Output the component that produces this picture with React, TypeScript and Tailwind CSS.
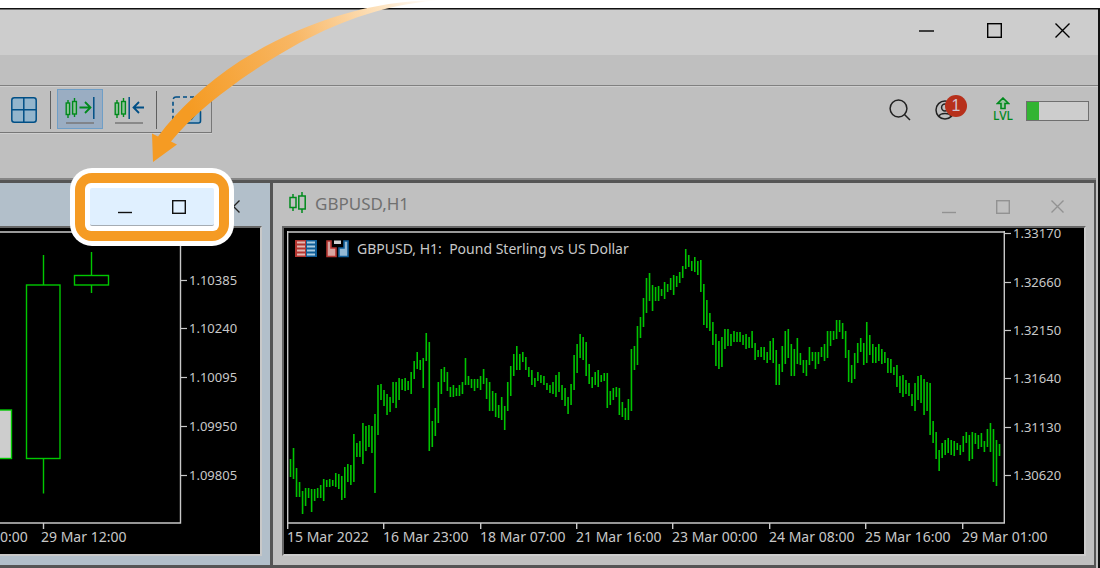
import type { ReactNode } from 'react';

type Bar = [high: number, low: number];

const FONT = "font-['Noto_Sans',sans-serif]";

const gbpusdBars: Bar[] = [
  [459, 477], [448, 479], [468, 497], [482, 497], [491, 514], [488, 506], [488, 498], [489, 512],
  [489, 501], [488, 498], [485, 498], [479, 501], [480, 487], [479, 487], [480, 486], [473, 487],
  [474, 489], [476, 500], [467, 498], [464, 482], [465, 485], [434, 482], [443, 457], [441, 457],
  [423, 464], [426, 451], [425, 447], [426, 453], [414, 493], [385, 435], [384, 400], [390, 406],
  [394, 415], [397, 412], [382, 403], [382, 408], [378, 400], [379, 390], [378, 391], [381, 390],
  [372, 394], [361, 379], [352, 369], [360, 370], [358, 388], [333, 361], [342, 451], [421, 447],
  [408, 436], [382, 423], [369, 394], [367, 382], [372, 391], [387, 397], [385, 397], [388, 396],
  [385, 396], [382, 394], [358, 385], [376, 385], [379, 388], [379, 391], [379, 388], [376, 390],
  [369, 384], [378, 399], [382, 411], [391, 411], [393, 417], [405, 418], [397, 420], [406, 430],
  [382, 411], [366, 396], [354, 376], [346, 370], [354, 370], [352, 362], [357, 370], [367, 377],
  [370, 385], [378, 387], [372, 381], [375, 383], [376, 385], [383, 390], [385, 393], [382, 394],
  [375, 397], [372, 392], [385, 400], [388, 406], [397, 414], [384, 405], [355, 390], [344, 373],
  [334, 358], [337, 360], [342, 376], [364, 384], [377, 388], [372, 385], [370, 387], [375, 382],
  [373, 381], [373, 408], [391, 405], [388, 400], [387, 397], [388, 415], [402, 417], [408, 420],
  [399, 420], [349, 411], [346, 370], [326, 365], [317, 338], [298, 327], [278, 313], [273, 301],
  [285, 311], [287, 301], [286, 301], [289, 296], [282, 299], [284, 292], [278, 290], [275, 295],
  [276, 287], [272, 283], [266, 278], [249, 269], [255, 267], [261, 271], [257, 272], [261, 275],
  [260, 292], [284, 325], [300, 328], [313, 331], [322, 345], [334, 366], [341, 369], [337, 367],
  [329, 349], [329, 346], [334, 346], [331, 342], [332, 342], [332, 342], [335, 345], [334, 349],
  [337, 348], [331, 348], [343, 360], [350, 357], [347, 357], [347, 360], [352, 363], [341, 360],
  [338, 363], [350, 385], [364, 385], [346, 372], [331, 364], [329, 358], [344, 376], [349, 376],
  [338, 364], [353, 365], [360, 373], [360, 376], [347, 365], [352, 361], [352, 369], [352, 364],
  [347, 357], [344, 361], [331, 358], [331, 346], [331, 340], [320, 339], [320, 332], [323, 339],
  [331, 358], [350, 382], [365, 383], [353, 379], [343, 363], [338, 352], [343, 365], [322, 363],
  [335, 355], [344, 363], [347, 363], [344, 361], [349, 364], [352, 363], [358, 373], [359, 373],
  [367, 375], [365, 387], [376, 393], [375, 397], [380, 394], [383, 396], [394, 406], [383, 411],
  [376, 400], [375, 403], [379, 415], [382, 411], [383, 435], [421, 443], [432, 459], [450, 471],
  [443, 458], [440, 455], [438, 453], [440, 455], [441, 456], [443, 450], [445, 455], [436, 452],
  [432, 443], [435, 461], [432, 459], [433, 444], [435, 449], [433, 447], [441, 452], [429, 447],
  [423, 452], [429, 482], [440, 486], [444, 456],
];

const FIRST_BAR = 290.5;
const LAST_BAR = 999.5;
const barStep = (LAST_BAR - FIRST_BAR) / (gbpusdBars.length - 1);

const gbpusdPrices = [
  { label: '1.33170', y: 233 },
  { label: '1.32660', y: 282 },
  { label: '1.32150', y: 330 },
  { label: '1.31640', y: 378 },
  { label: '1.31130', y: 427 },
  { label: '1.30620', y: 475 },
];

const gbpusdDates = [
  { label: '15 Mar 2022', x: 287 },
  { label: '16 Mar 23:00', x: 383 },
  { label: '18 Mar 07:00', x: 480 },
  { label: '21 Mar 16:00', x: 576 },
  { label: '23 Mar 00:00', x: 672 },
  { label: '24 Mar 08:00', x: 769 },
  { label: '25 Mar 16:00', x: 865 },
  { label: '29 Mar 01:00', x: 962 },
];

const eurusdPrices = [
  { label: '1.10385', y: 280 },
  { label: '1.10240', y: 328 },
  { label: '1.10095', y: 377 },
  { label: '1.09950', y: 426 },
  { label: '1.09805', y: 475 },
];

function MinimizeIcon({ size, low = false }: { size: number; low?: boolean }) {
  const y = low ? size - 1.5 : size / 2 + 0.5;
  return (
    <svg width={size} height={size} stroke="currentColor" strokeWidth="1.4" aria-hidden="true">
      <path d={`M0 ${y}H${size}`} />
    </svg>
  );
}

function MaximizeIcon({ size }: { size: number }) {
  return (
    <svg width={size} height={size} fill="none" stroke="currentColor" strokeWidth="1.4" aria-hidden="true">
      <rect x="0.7" y="0.7" width={size - 1.4} height={size - 1.4} />
    </svg>
  );
}

function CloseIcon({ size }: { size: number }) {
  return (
    <svg width={size} height={size} stroke="currentColor" strokeWidth="1.4" aria-hidden="true">
      <path d={`M0.5 0.5L${size - 0.5} ${size - 0.5}M${size - 0.5} 0.5L0.5 ${size - 0.5}`} />
    </svg>
  );
}

function WindowButton({ label, className, children }: { label: string; className: string; children: ReactNode }) {
  return (
    <button type="button" aria-label={label} className={`flex items-center justify-center ${className}`}>
      {children}
    </button>
  );
}

function Separator() {
  return <div className="mt-0.5 h-[38px] w-px bg-[#5f5f5f]" />;
}

function Candles() {
  return (
    <g stroke="#008a1c" strokeWidth="1.4" fill="#8fc39a">
      <path d="M3 3V21M9.5 1V20" />
      <rect x="1.2" y="6" width="3.4" height="11.5" />
      <rect x="7.6" y="4.5" width="3.8" height="12.5" />
    </g>
  );
}

function Toolbar() {
  return (
    <div className="flex h-[46px] items-start border-r border-b border-[#777] pt-0.5 pl-[11px] shadow-[0_1px_0_#cfcfcf]">
      <button type="button" aria-label="Tile windows" className="mt-2">
        <svg width="26" height="26" fill="#93b5cc" stroke="#004f86" strokeWidth="1.5" aria-hidden="true">
          <rect x="0.8" y="0.8" width="24.4" height="24.4" rx="2.5" />
          <path d="M12.8 1V25M1 12.8H25" />
        </svg>
      </button>
      <div className="ml-[13px]">
        <Separator />
      </div>
      <button
        type="button"
        aria-label="Auto scroll"
        aria-pressed="true"
        className="ml-1.5 flex h-10 w-[46px] items-center justify-center border border-[#6f9ec6] bg-[#9aadc2] pt-1"
      >
        <svg width="30" height="28" fill="none" strokeWidth="1.5" aria-hidden="true">
          <Candles />
          <path d="M14.5 10.5H25M20 5L25.5 10.5L20 16" stroke="#008a1c" strokeWidth="1.8" />
          <path d="M28.8 0V22" stroke="#004f86" />
          <path d="M1 26H29" stroke="#777" />
        </svg>
      </button>
      <button type="button" aria-label="Chart shift" className="ml-[11px] flex h-10 items-center pt-1">
        <svg width="31" height="28" fill="none" strokeWidth="1.5" aria-hidden="true">
          <Candles />
          <path d="M15.2 0V22" stroke="#004f86" />
          <path d="M19.5 10.5H30M25 5L19.5 10.5L25 16" stroke="#004f86" strokeWidth="1.8" />
          <path d="M1 26H29" stroke="#777" />
        </svg>
      </button>
      <div className="ml-[11px]">
        <Separator />
      </div>
      <button type="button" aria-label="New window" className="mt-[7px] mr-[9px] ml-[15px]">
        <svg width="30" height="28" fill="none" stroke="#004f86" strokeWidth="1.6" aria-hidden="true">
          <rect x="1" y="1" width="25" height="25" rx="3" strokeDasharray="4 3" />
          <rect x="10" y="14" width="18.5" height="13" rx="2" fill="#93b5cc" />
          <path d="M16 20L19.5 23L24 17" />
        </svg>
      </button>
    </div>
  );
}

function StatusTools() {
  return (
    <div className="flex items-center pt-2.5 pr-[9px]">
      <button type="button" aria-label="Search">
        <svg width="22" height="22" fill="none" stroke="#222" strokeWidth="1.5" aria-hidden="true">
          <circle cx="9.5" cy="9.5" r="8.4" />
          <path d="M15.5 15.5L21 21" />
        </svg>
      </button>
      <button type="button" aria-label="Account, 1 notification" className="relative ml-6">
        <svg width="20" height="22" fill="none" stroke="#222" strokeWidth="1.5" aria-hidden="true">
          <circle cx="10" cy="11" r="9" />
          <circle cx="10" cy="8.5" r="3.4" />
          <path d="M4 17.5C5 13.5 15 13.5 16 17.5" />
        </svg>
        <span className="absolute -top-1 left-2.5 flex size-[22px] items-center justify-center rounded-full bg-[#b7301b] font-['Liberation_Sans',sans-serif] text-base text-[#d3c4d0]">
          1
        </span>
      </button>
      <div className={`ml-[38px] flex flex-col items-center text-xs leading-3 font-medium text-[#008a1c] ${FONT}`}>
        <svg width="14" height="13" fill="#9ac4a0" stroke="currentColor" strokeWidth="1.6" aria-hidden="true">
          <path d="M7 1L12.5 6.5H9V11.5H5V6.5H1.5Z" />
        </svg>
        LVL
      </div>
      <div
        role="meter"
        aria-label="Level"
        aria-valuenow={20}
        className="mt-0.5 ml-[13px] h-5 w-[63px] border border-[#6f6f6f] bg-[#cdcdcd]"
      >
        <div className="h-full w-1/5 bg-[#32b432]" />
      </div>
    </div>
  );
}

function PriceAxis({ x, prices }: { x: number; prices: { label: string; y: number }[] }) {
  return (
    <g className="text-[13px]">
      {prices.map(({ label, y }) => (
        <g key={label}>
          <path d={`M${x} ${y + 0.5}h6`} stroke="#c8c8c8" strokeWidth="1.2" />
          <text x={x + 8} y={y + 5}>
            {label}
          </text>
        </g>
      ))}
    </g>
  );
}

function EurusdChart() {
  return (
    <svg viewBox="0 228 260 326" className={`block w-full bg-black text-sm ${FONT}`} fill="#c8c8c8">
      <path d="M0 232H180.5" stroke="#999" strokeWidth="2" />
      <path d="M180.5 231V523H0M43.5 523V529" fill="none" stroke="#c8c8c8" strokeWidth="1.4" />
      <g fill="none" stroke="#00c800" strokeWidth="1.4">
        <path d="M43.5 255V285M43.5 459V493.5M91.5 252V276M91.5 285V293" />
        <rect x="26.5" y="285" width="33.5" height="173.5" />
        <rect x="74.5" y="275.5" width="34" height="9.5" />
        <rect x="-5" y="410" width="16.5" height="48.5" fill="#cdcdcd" />
      </g>
      <PriceAxis x={181} prices={eurusdPrices} />
      <text x="0" y="542">
        0:00
      </text>
      <text x="41" y="542">
        29 Mar 12:00
      </text>
    </svg>
  );
}

function GbpusdChart() {
  return (
    <svg
      viewBox="284 228 800 326"
      className={`block w-full overflow-visible bg-black text-sm ${FONT}`}
      fill="#c8c8c8"
    >
      <path d="M287 232H1004" stroke="#999" strokeWidth="2" />
      <path d="M287.7 231V523H1004.3V231" fill="none" stroke="#c8c8c8" strokeWidth="1.4" />

      <g stroke="#00c400" strokeWidth="1.6">
        {gbpusdBars.map(([high, low], i) => (
          <path key={i} d={`M${FIRST_BAR + i * barStep} ${high}V${low}`} />
        ))}
      </g>

      <g>
        <path d="M295 240h11v17h-11z" fill="#b43530" />
        <path d="M306 240h11v17h-11z" fill="#0e5c96" />
        <path d="M297 242.5h8M297 246.5h8M297 250.5h8M297 254.5h8" stroke="#e2b7b2" strokeWidth="2.2" />
        <path d="M307 242.5h8M307 246.5h8M307 250.5h8M307 254.5h8" stroke="#a9cbe0" strokeWidth="2.2" />
      </g>
      <g strokeWidth="1.6">
        <path d="M327 241h4v7h5v8.5h-9z" fill="#d8a5a1" stroke="#b43530" />
        <path d="M348 241h-4v7h-5v8.5h9z" fill="#93b9d4" stroke="#0e5c96" />
        <path d="M334 240.5h7v3.5h-7z" fill="#d0d0d0" />
      </g>
      <text x="357" y="254" className="whitespace-pre">
        {'GBPUSD, H1:  Pound Sterling vs US Dollar'}
      </text>

      <PriceAxis x={1005} prices={gbpusdPrices} />
      {gbpusdDates.map(({ label, x }) => (
        <g key={label}>
          <path d={`M${x + 0.7} 523v6`} stroke="#c8c8c8" strokeWidth="1.4" />
          <text x={x} y="542">
            {label}
          </text>
        </g>
      ))}
    </svg>
  );
}

function Highlight() {
  return (
    <div className="absolute -top-[15px] right-9 rounded-[22px] bg-white p-[5px]">
      <div className="rounded-[17px] bg-[#f59b23] p-2.5">
        <div className="rounded-md bg-white p-[5px]">
          <div className="flex h-[38px] w-[124px] justify-center rounded-xs border-b border-[#a5acb3] bg-[#e0f0ff] text-[#111]">
            <WindowButton label="Minimize" className="w-[54px]">
              <MinimizeIcon size={14} low />
            </WindowButton>
            <WindowButton label="Maximize" className="w-[54px]">
              <MaximizeIcon size={14} />
            </WindowButton>
          </div>
        </div>
      </div>
    </div>
  );
}

function ArrowOverlay() {
  return (
    <svg
      width="440"
      height="170"
      className="pointer-events-none absolute top-0 left-0"
      aria-hidden="true"
    >
      <defs>
        <linearGradient id="arrow" gradientUnits="userSpaceOnUse" x1="445" y1="0" x2="190" y2="110">
          <stop offset="0" stopColor="#fff" stopOpacity="0.5" />
          <stop offset="0.22" stopColor="#fde3c0" />
          <stop offset="0.55" stopColor="#f8b765" />
          <stop offset="1" stopColor="#f59b23" />
        </linearGradient>
      </defs>
      <path
        d="M438 0C365 1 300 24 240 61C205 84 178 110 158 136.5L152 133.5L153 162L177 144.5L171 141.5C190 118 214 99 240 80C285 49 330 23 385 9C405 4 420 2 438 0Z"
        fill="url(#arrow)"
      />
    </svg>
  );
}

export default function App() {
  return (
    <div className="relative min-h-screen overflow-hidden bg-white pt-2">
      <main className="border-t border-r-2 border-[#111] bg-[#bfbfbf]">
        <header className="flex h-[46px] justify-end border-t border-[#707070] bg-[#cdcdcd] pr-0.5 pb-1 text-black">
          <WindowButton label="Minimize application" className="w-[68px]">
            <MinimizeIcon size={15} />
          </WindowButton>
          <WindowButton label="Maximize application" className="w-[68px]">
            <MaximizeIcon size={15} />
          </WindowButton>
          <WindowButton label="Close application" className="w-[68px]">
            <CloseIcon size={15} />
          </WindowButton>
        </header>

        <div className="h-[31px] border-b border-[#808080]" />
        <div className="flex h-[92px] items-start justify-between border-t border-[#cfcfcf]">
          <Toolbar />
          <StatusTools />
        </div>

        <div className="mr-0.5 border-t-2 border-[#858585]">
          <div className="flex border-t-[3px] border-r-2 border-b-[3px] border-[#555]">
            <section className="relative w-[270px] shrink-0 bg-[#b2bfca] pr-2 pb-[9px]">
              <div className="flex h-[43px] items-center justify-end pt-1 pr-0.5 text-[#222]">
                <WindowButton label="Close EURUSD chart" className="w-[54px]">
                  <CloseIcon size={13} />
                </WindowButton>
              </div>
              <div className="border-t-2 border-r-2 border-b-2 border-t-[#666] border-r-[#c8c8c8] border-b-[#c8c8c8]">
                <EurusdChart />
              </div>
              <Highlight />
            </section>

            <section className="min-w-0 flex-1 border-l-[3px] border-[#555] bg-[#c0c0c0] pr-2 pb-[9px] pl-[9px]">
              <div className="flex h-[43px] items-center pl-[7px]">
                <svg width="18" height="22" className="mb-1" fill="none" stroke="#008a1c" strokeWidth="1.5" aria-hidden="true">
                  <path d="M4 2V5.5M4 16V19M13 0V4M13 17V21" />
                  <rect x="1" y="5.5" width="6" height="10" />
                  <rect x="9.8" y="4" width="6.4" height="13" />
                </svg>
                <h2 className={`mb-0.5 ml-2 text-[17px] leading-none text-[#707070] ${FONT}`}>GBPUSD,H1</h2>
                <div className="ml-auto flex self-stretch pt-1 pr-0.5 text-[#929292]">
                  <WindowButton label="Minimize GBPUSD chart" className="w-[54px]">
                    <MinimizeIcon size={14} low />
                  </WindowButton>
                  <WindowButton label="Maximize GBPUSD chart" className="w-[54px]">
                    <MaximizeIcon size={14} />
                  </WindowButton>
                  <WindowButton label="Close GBPUSD chart" className="w-[54px]">
                    <CloseIcon size={13} />
                  </WindowButton>
                </div>
              </div>
              <div className="border-2 border-t-[#666] border-r-[#ccc] border-b-[#ccc] border-l-[#666]">
                <GbpusdChart />
              </div>
            </section>
          </div>
        </div>
      </main>
      <ArrowOverlay />
    </div>
  );
}
